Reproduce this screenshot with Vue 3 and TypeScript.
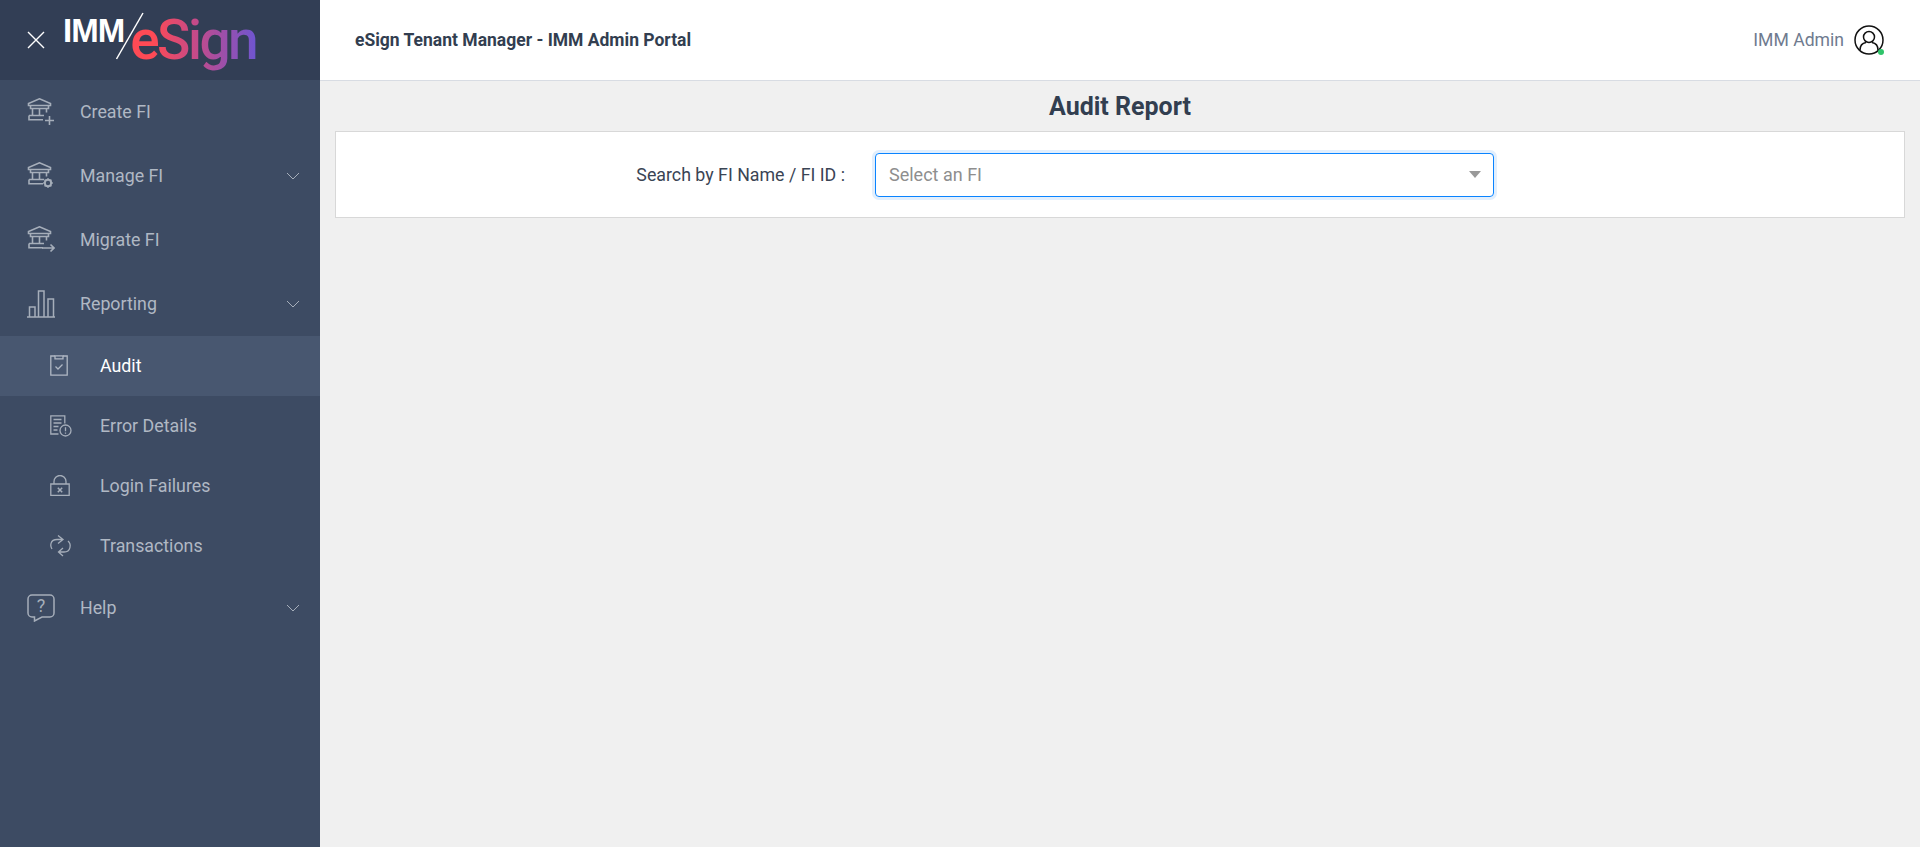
<script setup lang="ts">
interface NavItem { label: string; icon: string; chevron?: boolean; sub?: boolean; active?: boolean }
const items: NavItem[] = [
  { label: 'Create FI', icon: 'create' },
  { label: 'Manage FI', icon: 'manage', chevron: true },
  { label: 'Migrate FI', icon: 'migrate' },
  { label: 'Reporting', icon: 'chart', chevron: true },
  { label: 'Audit', icon: 'audit', sub: true, active: true },
  { label: 'Error Details', icon: 'error', sub: true },
  { label: 'Login Failures', icon: 'lock', sub: true },
  { label: 'Transactions', icon: 'sync', sub: true },
  { label: 'Help', icon: 'help', chevron: true },
]
</script>

<template>
  <div class="page">
    <aside class="sidebar">
      <div class="brand">
        <svg class="close" width="18" height="18" viewBox="0 0 18 18"><path d="M1 1l16 16M17 1L1 17" stroke="#fff" stroke-width="1.4" fill="none" /></svg>
        <div class="logo">
          <span class="imm">IMM</span>
          <svg class="slash" width="30" height="48" viewBox="0 0 30 48"><path d="M28 1L1.500 47" stroke="#fff" stroke-width="1.500" /></svg>
          <span class="esign">eSign</span>
        </div>
      </div>
      <nav>
        <a v-for="item in items" :key="item.label" class="nav" :class="{ sub: item.sub, active: item.active }">
          <span class="ico">
            <svg v-if="item.icon === 'create' || item.icon === 'manage' || item.icon === 'migrate'" width="28" height="27" viewBox="0 0 28 27" fill="none" stroke="currentColor" stroke-width="1.600">
              <path d="M1.500 7.500V5.500L12.500 .8l11 4.700v2z" />
              <path d="M3.500 7.500v3h18v-3M5.500 10.500v7M12.500 10.500v7M19.500 10.500v4M2 17.500h15M2 17.500v4.200h14" />
              <path v-if="item.icon === 'create'" d="M22.500 18v9M18 22.500h9" />
              <g v-if="item.icon === 'manage'">
                <circle cx="21" cy="21" r="3.200" stroke-width="2" />
                <path d="M21 16.200v1.600M21 24.200v1.600M16.200 21h1.600M24.200 21h1.600M17.600 17.600l1.100 1.100M23.300 23.300l1.100 1.100M24.400 17.600l-1.100 1.100M18.700 23.300l-1.100 1.100" stroke-width="1.600" />
              </g>
              <path v-if="item.icon === 'migrate'" d="M15 22h12M23.500 18.500L27 22l-3.500 3.500" />
            </svg>
            <svg v-else-if="item.icon === 'chart'" width="28" height="28" viewBox="0 0 28 28" fill="none" stroke="currentColor" stroke-width="1.500">
              <path d="M0 27h28M2.500 27V17H8v10M11.500 27V1H17v26M21 27V9h5.500v18" />
            </svg>
            <svg v-else-if="item.icon === 'audit'" width="18" height="21" viewBox="0 0 18 21" fill="none" stroke="currentColor" stroke-width="1.300">
              <path d="M5 1H.8v19.200h16.400V1H13" /><path d="M5 .8h8v3H5zM5.500 11.500l2.500 2.500 4.500-4.500" />
            </svg>
            <svg v-else-if="item.icon === 'error'" width="22" height="22" viewBox="0 0 22 22" fill="none" stroke="currentColor" stroke-width="1.300">
              <path d="M8.500 19H.8V.8h14v7.700" /><path d="M3.500 4.500h8M3.500 8h8M3.500 11.500h5M3.500 15h4" />
              <circle cx="15.500" cy="15.500" r="5.500" /><path d="M15.500 12.300v4M15.500 17.500v1.200" />
            </svg>
            <svg v-else-if="item.icon === 'lock'" width="20" height="21" viewBox="0 0 20 21" fill="none" stroke="currentColor" stroke-width="1.300">
              <path d="M.8 9h18.400v11.300H.8zM4 9V6.500a6 6 0 0 1 12 0V9" /><path d="M7.800 12.800l4.400 4.400M12.200 12.800l-4.400 4.400" stroke-width="1.500" />
            </svg>
            <svg v-else-if="item.icon === 'sync'" width="22" height="22" viewBox="0 0 22 22" fill="none" stroke="currentColor" stroke-width="1.300">
              <path d="M2 14C0 11 0 4.500 7 4.500h6M8 .5l5 4-5 4" />
              <path d="M18 6c3.500 3 3 11-4 11H8.500M13 13l-4.500 4 4.500 4" />
            </svg>
            <svg v-else width="28" height="28" viewBox="0 0 28 28" fill="none" stroke="currentColor" stroke-width="1.500">
              <path d="M5 1h18a4 4 0 0 1 4 4v14a4 4 0 0 1-4 4h-8l-7.500 4V23H5a4 4 0 0 1-4-4V5a4 4 0 0 1 4-4z" />
              <text x="14" y="18" text-anchor="middle" class="q">?</text>
            </svg>
          </span>
          <span class="label">{{ item.label }}</span>
          <svg v-if="item.chevron" class="chev" width="14" height="8" viewBox="0 0 14 8" fill="none" stroke="currentColor" stroke-width="1"><path d="M1 1l6 6 6-6" /></svg>
        </a>
      </nav>
    </aside>
    <div class="right">
      <header class="top">
        <strong class="app">eSign Tenant Manager - IMM Admin Portal</strong>
        <div class="user">
          <span>IMM Admin</span>
          <span class="avatar">
            <svg width="30" height="30" viewBox="0 0 30 30" fill="none" stroke="#111" stroke-width="1.500">
              <circle cx="15" cy="15" r="14" /><circle cx="15" cy="12" r="5.500" />
              <path d="M6 25c0-5 3-7 6-7.500M24 25c0-5-3-7-6-7.500" />
            </svg>
            <i class="dot"></i>
          </span>
        </div>
      </header>
      <main class="main">
        <h1>Audit Report</h1>
        <section class="card">
          <label>Search by FI Name / FI ID :</label>
          <div class="select">
            <span>Select an FI</span>
            <i class="caret"></i>
          </div>
        </section>
      </main>
    </div>
  </div>
</template>

<style>
html, body { margin: 0; }
</style>

<style scoped>
.page { display: flex; height: 847px; overflow: hidden; font-family: Roboto, "Liberation Sans", sans-serif; }
.sidebar { width: 320px; flex: none; background: #3d4b63; color: #b0b8c4; }
.brand { height: 80px; background: #323e55; display: flex; align-items: center; padding-left: 27px; box-sizing: border-box; }
.close { flex: none; }
.logo { display: flex; align-items: center; margin-left: 18px; position: relative; height: 80px; }
.imm { font-family: "Liberation Sans", sans-serif; font-weight: 700; font-size: 33px; color: #fff; letter-spacing: -1px; margin-top: -18px; }
.slash { margin-left: -9px; margin-top: -8px; flex: none; }
.esign { font-family: Roboto, sans-serif; font-size: 55px; font-weight: 500; letter-spacing: -2.500px; margin-left: -15px; background: linear-gradient(90deg, #fe4a55 0%, #fe4a55 18%, #c84a86 50%, #6f55d0 100%); -webkit-background-clip: text; background-clip: text; color: transparent; }
.nav { height: 64px; display: flex; align-items: center; padding: 0 20px 1px 27px; font-size: 17.800px; box-sizing: border-box; }
.nav.sub { height: 60px; padding-left: 50px; }
.nav.active { background: #485770; color: #fff; }
.nav.active .ico { color: #b0b8c4; }
.ico { width: 53px; flex: none; display: flex; align-items: center; color: #a6aeba; }
.sub .ico { width: 50px; }
.label { flex: 1; }
.chev { flex: none; color: #a6aeba; }
.q { font-family: Roboto, sans-serif; font-size: 18px; fill: currentColor; stroke: none; }
.right { flex: 1; min-width: 0; display: flex; flex-direction: column; background: #f0f0f0; }
.top { height: 81px; flex: none; box-sizing: border-box; background: #fff; border-bottom: 1px solid #d8dce3; display: flex; align-items: center; justify-content: space-between; padding: 0 36px 0 35px; }
.app { font-size: 17.500px; font-weight: 700; color: #323e50; }
.user { display: flex; align-items: center; gap: 10px; font-size: 17.600px; color: #6f7b8f; }
.avatar { position: relative; width: 30px; height: 30px; display: block; }
.avatar svg { display: block; }
.dot { position: absolute; right: 0; bottom: 0; width: 6px; height: 6px; border-radius: 50%; background: #2fc46a; }
.main { flex: 1; padding: 0 15px; }
h1 { margin: 0; height: 50px; line-height: 52px; text-align: center; font-size: 25px; font-weight: 700; color: #323e50; }
.card { margin-top: 0; height: 87px; box-sizing: border-box; background: #fff; border: 1px solid #d8d8d8; display: flex; align-items: center; }
label { width: 509px; margin-right: 30px; text-align: right; font-size: 17.800px; color: #3a4454; flex: none; }
.select { width: 619px; height: 44px; box-sizing: border-box; border: 1px solid #0a84ff; border-radius: 4px; box-shadow: 0 0 0 3px #e2effd; display: flex; align-items: center; justify-content: space-between; padding: 0 12px 0 13px; font-size: 18px; color: #8e8e8e; }
.caret { width: 0; height: 0; border-left: 6.500px solid transparent; border-right: 6.500px solid transparent; border-top: 7px solid #999; }
</style>
